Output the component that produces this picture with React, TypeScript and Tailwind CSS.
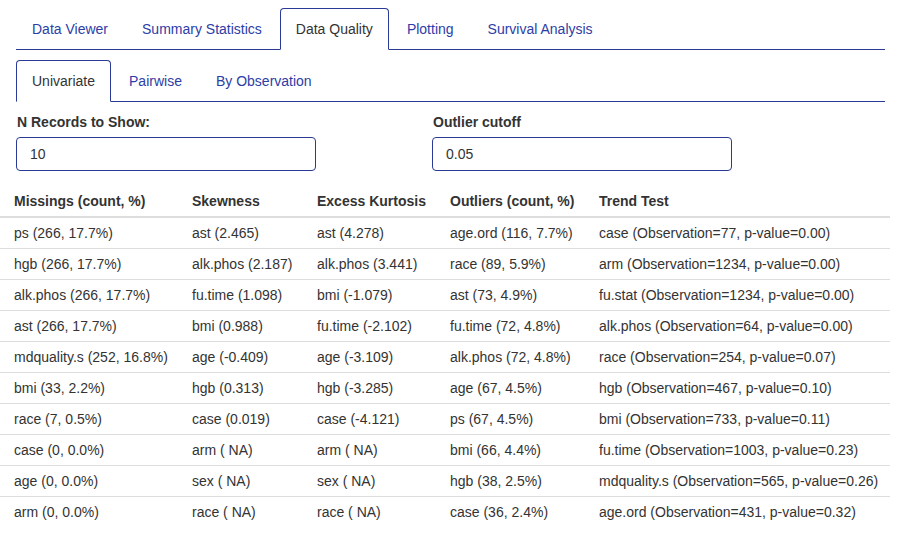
const mainTabs = ["Data Viewer", "Summary Statistics", "Data Quality", "Plotting", "Survival Analysis"];
const subTabs = ["Univariate", "Pairwise", "By Observation"];

const columns = [
  { title: "Missings (count, %)", w: "w-[178px]" },
  { title: "Skewness", w: "w-[125px]" },
  { title: "Excess Kurtosis", w: "w-[133px]" },
  { title: "Outliers (count, %)", w: "w-[149px]" },
  { title: "Trend Test", w: "w-[305px]" },
];

const rows: string[][] = [
  ["ps (266, 17.7%)", "ast (2.465)", "ast (4.278)", "age.ord (116, 7.7%)", "case (Observation=77, p-value=0.00)"],
  ["hgb (266, 17.7%)", "alk.phos (2.187)", "alk.phos (3.441)", "race (89, 5.9%)", "arm (Observation=1234, p-value=0.00)"],
  ["alk.phos (266, 17.7%)", "fu.time (1.098)", "bmi (-1.079)", "ast (73, 4.9%)", "fu.stat (Observation=1234, p-value=0.00)"],
  ["ast (266, 17.7%)", "bmi (0.988)", "fu.time (-2.102)", "fu.time (72, 4.8%)", "alk.phos (Observation=64, p-value=0.00)"],
  ["mdquality.s (252, 16.8%)", "age (-0.409)", "age (-3.109)", "alk.phos (72, 4.8%)", "race (Observation=254, p-value=0.07)"],
  ["bmi (33, 2.2%)", "hgb (0.313)", "hgb (-3.285)", "age (67, 4.5%)", "hgb (Observation=467, p-value=0.10)"],
  ["race (7, 0.5%)", "case (0.019)", "case (-4.121)", "ps (67, 4.5%)", "bmi (Observation=733, p-value=0.11)"],
  ["case (0, 0.0%)", "arm ( NA)", "arm ( NA)", "bmi (66, 4.4%)", "fu.time (Observation=1003, p-value=0.23)"],
  ["age (0, 0.0%)", "sex ( NA)", "sex ( NA)", "hgb (38, 2.5%)", "mdquality.s (Observation=565, p-value=0.26)"],
  ["arm (0, 0.0%)", "race ( NA)", "race ( NA)", "case (36, 2.4%)", "age.ord (Observation=431, p-value=0.32)"],
];

const Tabs = ({ items, active }: { items: string[]; active: string }) => (
  <ul className="flex border-b border-[#2b3a94] mx-4">
    {items.map((t) => (
      <li key={t} className="mr-[2px] -mb-px">
        <div
          className={
            t === active
              ? "px-[15px] py-[10px] leading-5 border border-[#2b3a94] border-b-white rounded-t-[4px] text-[#333] bg-white"
              : "px-[15px] py-[10px] leading-5 border border-transparent text-[#2d3da6]"
          }
        >
          {t}
        </div>
      </li>
    ))}
  </ul>
);

const Field = ({ label, value }: { label: string; value: string }) => (
  <div className="w-[300px]">
    <div className="font-bold leading-5 mb-[5px] pl-px">{label}</div>
    <div className="h-[34px] border border-[#2b3a94] rounded-[4px] px-[13px] flex items-center leading-5">
      {value}
    </div>
  </div>
);

export default function App() {
  return (
    <div className="w-[901px] h-[537px] overflow-hidden bg-white text-[14px] text-[#333] font-[family-name:'Liberation_Sans',Arial,sans-serif] pt-2">
      <Tabs items={mainTabs} active="Data Quality" />
      <div className="mt-[10px]">
        <Tabs items={subTabs} active="Univariate" />
      </div>
      <div className="flex gap-[116px] px-4 mt-[10px]">
        <Field label="N Records to Show:" value="10" />
        <Field label="Outlier cutoff" value="0.05" />
      </div>
      <table className="mt-[15px] w-[890px] table-fixed border-collapse">
        <thead>
          <tr className="border-b-2 border-[#ddd]">
            {columns.map((c) => (
              <th key={c.title} className={`${c.w} text-left font-bold pl-[14px] pr-1 py-[5px] leading-5 whitespace-nowrap`}>
                {c.title}
              </th>
            ))}
          </tr>
        </thead>
        <tbody>
          {rows.map((r, i) => (
            <tr key={i} className={i < rows.length - 1 ? "border-b border-[#ddd]" : ""}>
              {r.map((cell, j) => (
                <td key={j} className="pl-[14px] pr-1 py-[5px] leading-5 whitespace-nowrap">
                  {cell}
                </td>
              ))}
            </tr>
          ))}
        </tbody>
      </table>
    </div>
  );
}
